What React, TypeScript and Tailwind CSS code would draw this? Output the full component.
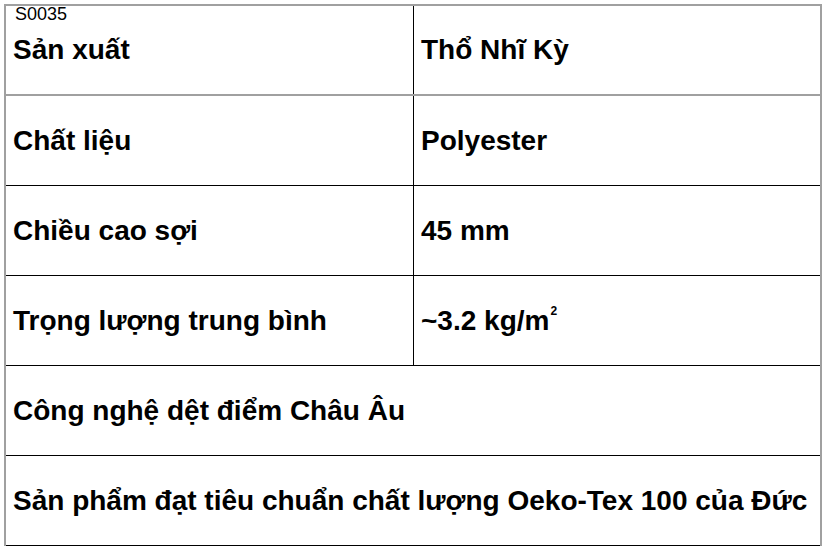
const rows: [string, string | null][] = [
  ["Chất liệu", "Polyester"],
  ["Chiều cao sợi", "45 mm"],
  ["Trọng lượng trung bình", "~3.2 kg/m2"],
  ["Công nghệ dệt điểm Châu Âu", null],
  ["Sản phẩm đạt tiêu chuẩn chất lượng Oeko-Tex 100 của Đức", null],
]

function Value({ text }: { text: string }) {
  if (text.endsWith("m2")) {
    return (
      <>
        {text.slice(0, -1)}
        <span className="text-[12px] align-top relative top-[-2px] ml-[1px]">2</span>
      </>
    )
  }
  return <>{text}</>
}

export default function App() {
  return (
    <div className="w-[827px] h-[551px] bg-white pt-[4px] pl-[4px] font-['Liberation_Sans',Arial,sans-serif] text-black">
      <div className="relative w-[818px] border-t-2 border-l-2 border-r-2 border-[#a0a0a0]">
        <div className="absolute left-[9px] top-[-1px] text-[18px] leading-none">S0035</div>

        <div className="flex h-[90px] border-b-2 border-[#a0a0a0]">
          <div className="w-[408px] border-r border-black flex items-center pl-[7px] text-[28px] font-bold">
            Sản xuất
          </div>
          <div className="flex-1 flex items-center pl-[7px] text-[28px] font-bold">Thổ Nhĩ Kỳ</div>
        </div>

        {rows.map(([label, value]) => (
          <div key={label} className="flex h-[90px] border-b border-black">
            {value === null ? (
              <div className="flex-1 flex items-center pl-[7px] text-[28px] font-bold">{label}</div>
            ) : (
              <>
                <div className="w-[408px] border-r border-black flex items-center pl-[7px] text-[28px] font-bold">
                  {label}
                </div>
                <div className="flex-1 flex items-center pl-[7px] text-[28px] font-bold">
                  <span className="leading-none">
                    <Value text={value} />
                  </span>
                </div>
              </>
            )}
          </div>
        ))}
      </div>
    </div>
  )
}
